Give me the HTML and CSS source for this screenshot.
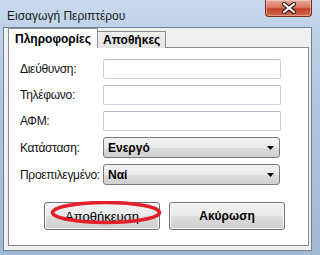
FILE: index.html
```html
<!DOCTYPE html>
<html>
<head>
<meta charset="utf-8">
<link rel="stylesheet" href="styles.css">
</head>
<body>
<div class="window">
  <div class="titlebar">
    <span class="title">Εισαγωγή Περιπτέρου</span>
    <div class="close">
      <svg width="16" height="12" viewBox="0 0 16 12">
        <path d="M3 2 L13 10 M13 2 L3 10" stroke="#3b1a14" stroke-width="4.2" stroke-linecap="round"/>
        <path d="M3 2 L13 10 M13 2 L3 10" stroke="#ffffff" stroke-width="2.2" stroke-linecap="round"/>
      </svg>
    </div>
  </div>
  <div class="client">
    <div class="tabs">
      <div class="tab active">Πληροφορίες</div>
      <div class="tab">Αποθήκες</div>
    </div>
    <div class="panel">
      <div class="form">
        <div class="row"><span class="label">Διεύθυνση:</span><div class="textbox"></div></div>
        <div class="row"><span class="label">Τηλέφωνο:</span><div class="textbox"></div></div>
        <div class="row"><span class="label">ΑΦΜ:</span><div class="textbox"></div></div>
        <div class="row"><span class="label">Κατάσταση:</span>
          <div class="combo"><span class="value">Ενεργό</span>
            <svg class="arrow" width="7" height="4" viewBox="0 0 7 4"><polygon points="0,0 7,0 3.5,4" fill="#000"/></svg>
          </div>
        </div>
        <div class="row"><span class="label">Προεπιλεγμένο:</span>
          <div class="combo"><span class="value">Ναί</span>
            <svg class="arrow" width="7" height="4" viewBox="0 0 7 4"><polygon points="0,0 7,0 3.5,4" fill="#000"/></svg>
          </div>
        </div>
      </div>
      <div class="buttons">
        <div class="btn-wrap">
          <div class="btn">Αποθήκευση</div>
          <svg class="mark" width="113" height="24" viewBox="0 0 113 24"><ellipse cx="56" cy="11.5" rx="53.5" ry="10" fill="none" stroke="#e5202b" stroke-width="3.6"/></svg>
        </div>
        <div class="btn strong">Ακύρωση</div>
      </div>
    </div>
  </div>
</div>
</body>
</html>
```

FILE: styles.css
```css
html, body {
  margin: 0;
  padding: 0;
}
body {
  width: 316px;
  height: 255px;
  overflow: hidden;
  font-family: "Liberation Sans", Arial, sans-serif;
  font-size: 12px;
  color: #000;
  background: linear-gradient(to bottom, #cadaee 0px, #bfd2e8 27px, #aec4dc 120px, #a3b9d2 255px);
}
.window {
  display: flex;
  flex-direction: column;
  height: 255px;
}
.titlebar {
  height: 27px;
  display: flex;
  align-items: flex-start;
  flex-shrink: 0;
}
.title {
  padding-left: 7px;
  padding-top: 9px;
  color: #1a1a1a;
}
.close {
  margin-left: auto;
  margin-right: 4px;
  width: 45px;
  height: 16px;
  border: 1px solid #7a2e22;
  border-top: none;
  border-radius: 0 0 4px 4px;
  background: linear-gradient(to bottom, #e9a99a 0%, #dc7a64 45%, #c6402a 55%, #d26a52 100%);
  display: flex;
  align-items: center;
  justify-content: center;
  box-shadow: inset 0 0 0 1px rgba(255,255,255,0.35);
}
.client {
  margin: 0 4px 0 3px;
  height: 222px;
  background: #f0f0f0;
  border: 1px solid #6f8095;
  display: flex;
  flex-direction: column;
  padding-left: 4px;
  padding-right: 2px;
}
.tabs {
  display: flex;
  align-items: flex-end;
  height: 20px;
  margin-bottom: -1px;
  position: relative;
  z-index: 1;
}
.tab {
  height: 17px;
  box-sizing: border-box;
  border: 1px solid #898c95;
  border-bottom: none;
  padding: 1px 5px 0 5px;
  font-weight: bold;
  background: linear-gradient(to bottom, #f0f0f0, #e3e3e3);
  margin-left: -1px;
}
.tab.active {
  height: 20px;
  background: #fff;
  padding: 3px 6px 0 6px;
  margin-left: 0;
  z-index: 2;
  position: relative;
}
.panel {
  background: #fff;
  border: 1px solid #898c95;
  height: 199px;
  box-sizing: border-box;
  padding: 11px 0 0 11px;
  display: flex;
  flex-direction: column;
}
.form {
  display: flex;
  flex-direction: column;
  gap: 6px;
}
.row {
  display: flex;
  align-items: center;
}
.label {
  width: 83px;
  flex-shrink: 0;
  white-space: nowrap;
  letter-spacing: -0.3px;
  color: #111;
}
.textbox {
  width: 178px;
  height: 20px;
  box-sizing: border-box;
  border: 1px solid #cdd1d8;
  border-top-color: #b5b9c1;
  border-radius: 2px;
  background: #fff;
}
.combo {
  width: 177px;
  height: 21px;
  box-sizing: border-box;
  border: 1px solid #7a7a7a;
  border-radius: 3px;
  background: linear-gradient(to bottom, #f2f2f2 0%, #ebebeb 50%, #dddddd 51%, #cfcfcf 100%);
  display: flex;
  align-items: center;
  padding-left: 4px;
  padding-right: 5px;
  font-weight: bold;
}
.combo .value {
  flex: 1;
}
.buttons {
  display: flex;
  gap: 9px;
  margin-top: 17px;
  padding-left: 24px;
}
.btn-wrap {
  position: relative;
}
.btn {
  width: 116px;
  height: 28px;
  box-sizing: border-box;
  border: 1px solid #707070;
  border-radius: 3px;
  background: linear-gradient(to bottom, #f2f2f2 0%, #ebebeb 50%, #dddddd 51%, #cfcfcf 100%);
  box-shadow: inset 0 0 0 1px #fbfbfb;
  display: flex;
  align-items: center;
  justify-content: center;
  font-size: 13px;
}
.btn.strong {
  font-weight: bold;
  font-size: 12px;
}
.mark {
  position: absolute;
  left: 6px;
  top: -1px;
}
```
